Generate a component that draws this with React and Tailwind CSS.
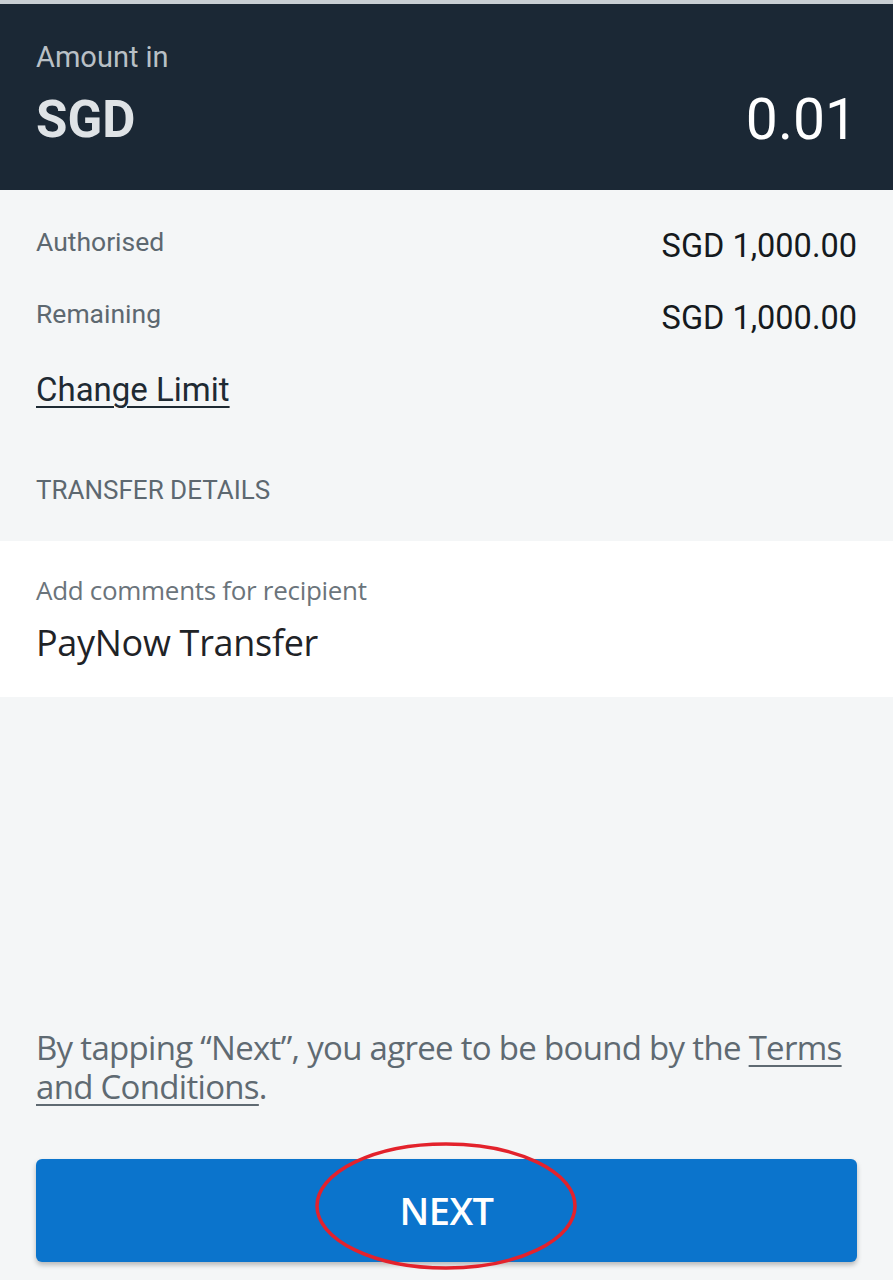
export default function App() {
  return (
    <div className="relative flex h-[1280px] w-[893px] flex-col overflow-hidden bg-[#f4f6f7]" style={{ fontFamily: "Roboto, 'Liberation Sans', sans-serif" }}>
      {/* Header */}
      <div className="h-[190px] border-t-[4px] border-[#c9cfd3] bg-[#1b2835] px-9 pt-[35px]">
        <div className="text-[29px] leading-[36px] text-[#b9c0c6]">Amount in</div>
        <div className="mt-[17px] flex items-center justify-between">
          <span className="text-[51px] font-bold leading-[56px] text-[#dfe3e6]">SGD</span>
          <span className="text-[57px] leading-[56px] text-white">0.01</span>
        </div>
      </div>

      {/* Limits */}
      <div className="h-[351px] px-9 pt-[35px]">
        <div className="flex items-start justify-between">
          <span className="text-[26.5px] leading-[34px] text-[#5d6870]">Authorised</span>
          <span className="mt-[4px] text-[32.5px] leading-[34px] text-[#151a1e]">SGD 1,000.00</span>
        </div>
        <div className="mt-[34px] flex items-start justify-between">
          <span className="text-[26.5px] leading-[34px] text-[#5d6870]">Remaining</span>
          <span className="mt-[4px] text-[32.5px] leading-[34px] text-[#151a1e]">SGD 1,000.00</span>
        </div>
        <div className="mt-[35px] text-[33px] leading-[40px] text-[#1e2a33] underline decoration-[2px] underline-offset-[5px]">Change Limit</div>
        <div className="mt-[64px] text-[26px] leading-[32px] text-[#5d6870]">TRANSFER DETAILS</div>
      </div>

      {/* Comments */}
      <div className="h-[156px] bg-white px-9 pt-[32px]" style={{ fontFamily: "'Open Sans', 'Noto Sans', sans-serif" }}>
        <div className="text-[26px] leading-[34px] tracking-[-0.3px] text-[#6b747b]">Add comments for recipient</div>
        <div className="mt-[14px] text-[36px] leading-[44px] tracking-[-0.3px] text-[#1f2327]">PayNow Transfer</div>
      </div>

      <div className="flex-1" />

      {/* Terms */}
      <div className="px-9 text-[33px] leading-[39px] tracking-[-0.7px] text-[#5f6a72]" style={{ fontFamily: "'Open Sans', 'Noto Sans', sans-serif" }}>
        <div className="whitespace-nowrap">
          By tapping “Next”, you agree to be bound by the{" "}
          <span className="underline decoration-[2px] underline-offset-[5px]">Terms</span>
        </div>
        <div>
          <span className="underline decoration-[2px] underline-offset-[5px]">and Conditions</span>.
        </div>
      </div>

      {/* Button */}
      <div className="px-9 pb-[18px] pt-[53px]">
        <div className="relative flex h-[103px] items-center justify-center rounded-[6px] bg-[#0b74cc] shadow-[0_3px_5px_rgba(0,0,0,0.25)]">
          <span className="text-[38px] font-semibold tracking-[-0.5px] text-white" style={{ fontFamily: "'Open Sans', 'Noto Sans', sans-serif" }}>NEXT</span>
          <svg className="pointer-events-none absolute left-[278px] top-[-18px]" width="264" height="130" viewBox="0 0 264 130">
            <ellipse cx="132" cy="65" rx="129" ry="62" fill="none" stroke="#e3222c" strokeWidth="3.5" />
          </svg>
        </div>
      </div>
    </div>
  );
}
